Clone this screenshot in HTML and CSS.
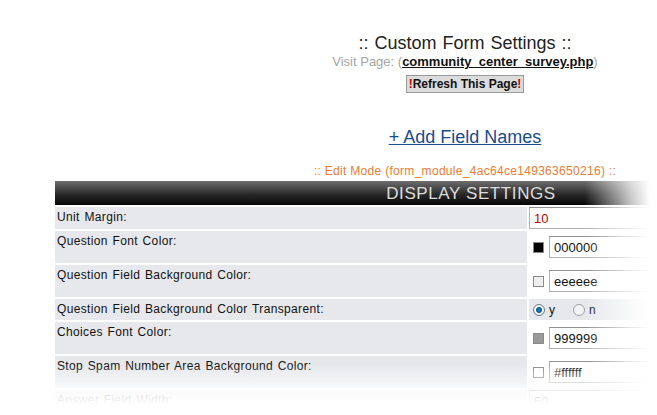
FILE: index.html
```html
<!DOCTYPE html>
<html lang="en">
<head>
    <meta charset="UTF-8">
    <title>Custom Form Settings</title>
    <link rel="stylesheet" href="styles.css">
</head>
<body>
    <div class="page">
        <div class="head">
            <h1>:: Custom Form Settings ::</h1>
            <div class="visit">Visit Page: (<a href="#">community_center_survey.php</a>)</div>
            <button class="refresh"><span class="bang">!</span>Refresh This Page<span class="bang">!</span></button>
            <div class="add"><a href="#">+ Add Field Names</a></div>
            <div class="mode">:: Edit Mode (form_module_4ac64ce149363650216) ::</div>
        </div>

        <div class="settings">
            <div class="bar">DISPLAY SETTINGS</div>

            <div class="row row-input">
                <div class="label">Unit Margin:</div>
                <div class="value"><input type="text" class="field red" value="10"></div>
            </div>

            <div class="row row-color">
                <div class="label">Question Font Color:</div>
                <div class="value"><span class="swatch" style="background:#000000"></span><input type="text" class="field" value="000000"></div>
            </div>

            <div class="row row-color">
                <div class="label">Question Field Background Color:</div>
                <div class="value"><span class="swatch" style="background:#eeeeee"></span><input type="text" class="field" value="eeeeee"></div>
            </div>

            <div class="row row-radio">
                <div class="label">Question Field Background Color Transparent:</div>
                <div class="value gray">
                    <label class="opt"><span class="radio on"></span>y</label>
                    <label class="opt"><span class="radio"></span>n</label>
                </div>
            </div>

            <div class="row row-color">
                <div class="label">Choices Font Color:</div>
                <div class="value"><span class="swatch" style="background:#999999"></span><input type="text" class="field" value="999999"></div>
            </div>

            <div class="row row-color">
                <div class="label">Stop Spam Number Area Background Color:</div>
                <div class="value"><span class="swatch" style="background:#ffffff"></span><input type="text" class="field" value="#ffffff"></div>
            </div>

            <div class="row row-input">
                <div class="label">Answer Field Width:</div>
                <div class="value"><input type="text" class="field" value="50"></div>
            </div>

            <div class="fade-right"></div>
            <div class="fade-bottom"></div>
        </div>
    </div>
</body>
</html>
```

FILE: styles.css
```css
/* General styles */
html, body {
    height: 100%;
    overflow: hidden;
}

body {
    margin: 0;
    padding: 0;
    background: #ffffff;
    font-family: "Liberation Sans", Arial, sans-serif;
}

.page {
    width: 820px;
    margin-left: 55px;
}

/* Heading block */
.head {
    text-align: center;
    padding-top: 33px;
}

.head h1 {
    margin: 0;
    font-size: 18px;
    font-weight: normal;
    line-height: 20px;
    color: #222222;
    word-spacing: 1px;
}

.visit {
    font-size: 13px;
    line-height: 16px;
    color: #a4a4a4;
    margin-top: 1px;
}

.visit a {
    color: #111111;
    font-weight: bold;
    text-decoration: underline;
}

.refresh {
    margin-top: 5px;
    font-family: "Liberation Sans", Arial, sans-serif;
    font-size: 12px;
    font-weight: bold;
    line-height: 14px;
    color: #111111;
    background: #dcdcdc;
    border: 1px solid #9a9a9a;
    padding: 1px 2px;
}

.refresh .bang {
    color: #cc0000;
}

.add {
    margin-top: 33px;
    font-size: 18px;
    line-height: 22px;
}

.add a {
    color: #1b4c8c;
    text-decoration: underline;
}

.mode {
    margin-top: 16px;
    font-size: 12px;
    line-height: 14px;
    letter-spacing: 0.3px;
    color: #f07a30;
}

/* Settings table */
.settings {
    position: relative;
    margin-top: 3px;
}

.bar {
    height: 24px;
    line-height: 26px;
    text-align: center;
    padding-left: 12px;
    font-size: 17px;
    letter-spacing: 0.6px;
    color: #dddddd;
    background: linear-gradient(to bottom, #6e6e6e 0%, #2a2a2a 55%, #050505 100%);
}

.row {
    display: grid;
    grid-template-columns: 472px 1fr;
    column-gap: 2px;
    margin-top: 2px;
}

.label {
    background: #e6e8ec;
    font-size: 12px;
    line-height: 14px;
    letter-spacing: 0.35px;
    word-spacing: 1px;
    color: #111111;
    padding: 3px 2px;
}

.row-input { height: 22px; }
.row-color { height: 32px; }
.row-radio { height: 21px; }

.value {
    display: flex;
    align-items: center;
    gap: 5px;
    background: #ffffff;
}

.value.gray {
    background: #e6e8ec;
    padding-left: 4px;
    gap: 18px;
}

.row-color .value {
    padding-left: 4px;
}

.field {
    box-sizing: border-box;
    width: 220px;
    height: 22px;
    margin: 0;
    padding: 1px 4px;
    border: 1px solid #b0b0b0;
    border-top-color: #909090;
    font-family: "Liberation Sans", Arial, sans-serif;
    font-size: 13px;
    color: #111111;
    background: #ffffff;
}

.field.red {
    color: #c00000;
}

.swatch {
    display: inline-block;
    box-sizing: border-box;
    width: 11px;
    height: 11px;
    border: 1px solid #8a8a8a;
}

.opt {
    display: flex;
    align-items: center;
    gap: 4px;
    font-size: 12px;
    color: #111111;
}

.radio {
    display: inline-block;
    box-sizing: border-box;
    width: 12px;
    height: 12px;
    border-radius: 50%;
    border: 1px solid #9aa0a8;
    background: #f4f4f4;
}

.radio.on {
    border-color: #6a7a8a;
    background: radial-gradient(circle, #2a88c8 0, #0b5a94 2.5px, #ffffff 3.5px, #e8eef4 5px);
}

/* Fades over the table edges */
.fade-right {
    position: absolute;
    top: 0;
    width: 130px;
    bottom: 0;
    left: 530px;
    pointer-events: none;
    background: linear-gradient(to right, rgba(255, 255, 255, 0) 0px, rgba(255, 255, 255, 0.75) 45px, #ffffff 65px);
}

.fade-bottom {
    position: absolute;
    left: 0;
    width: 610px;
    top: 184px;
    bottom: 0;
    pointer-events: none;
    background: linear-gradient(to bottom, rgba(255, 255, 255, 0) 0px, rgba(255, 255, 255, 0.8) 25px, #ffffff 40px);
}
```
